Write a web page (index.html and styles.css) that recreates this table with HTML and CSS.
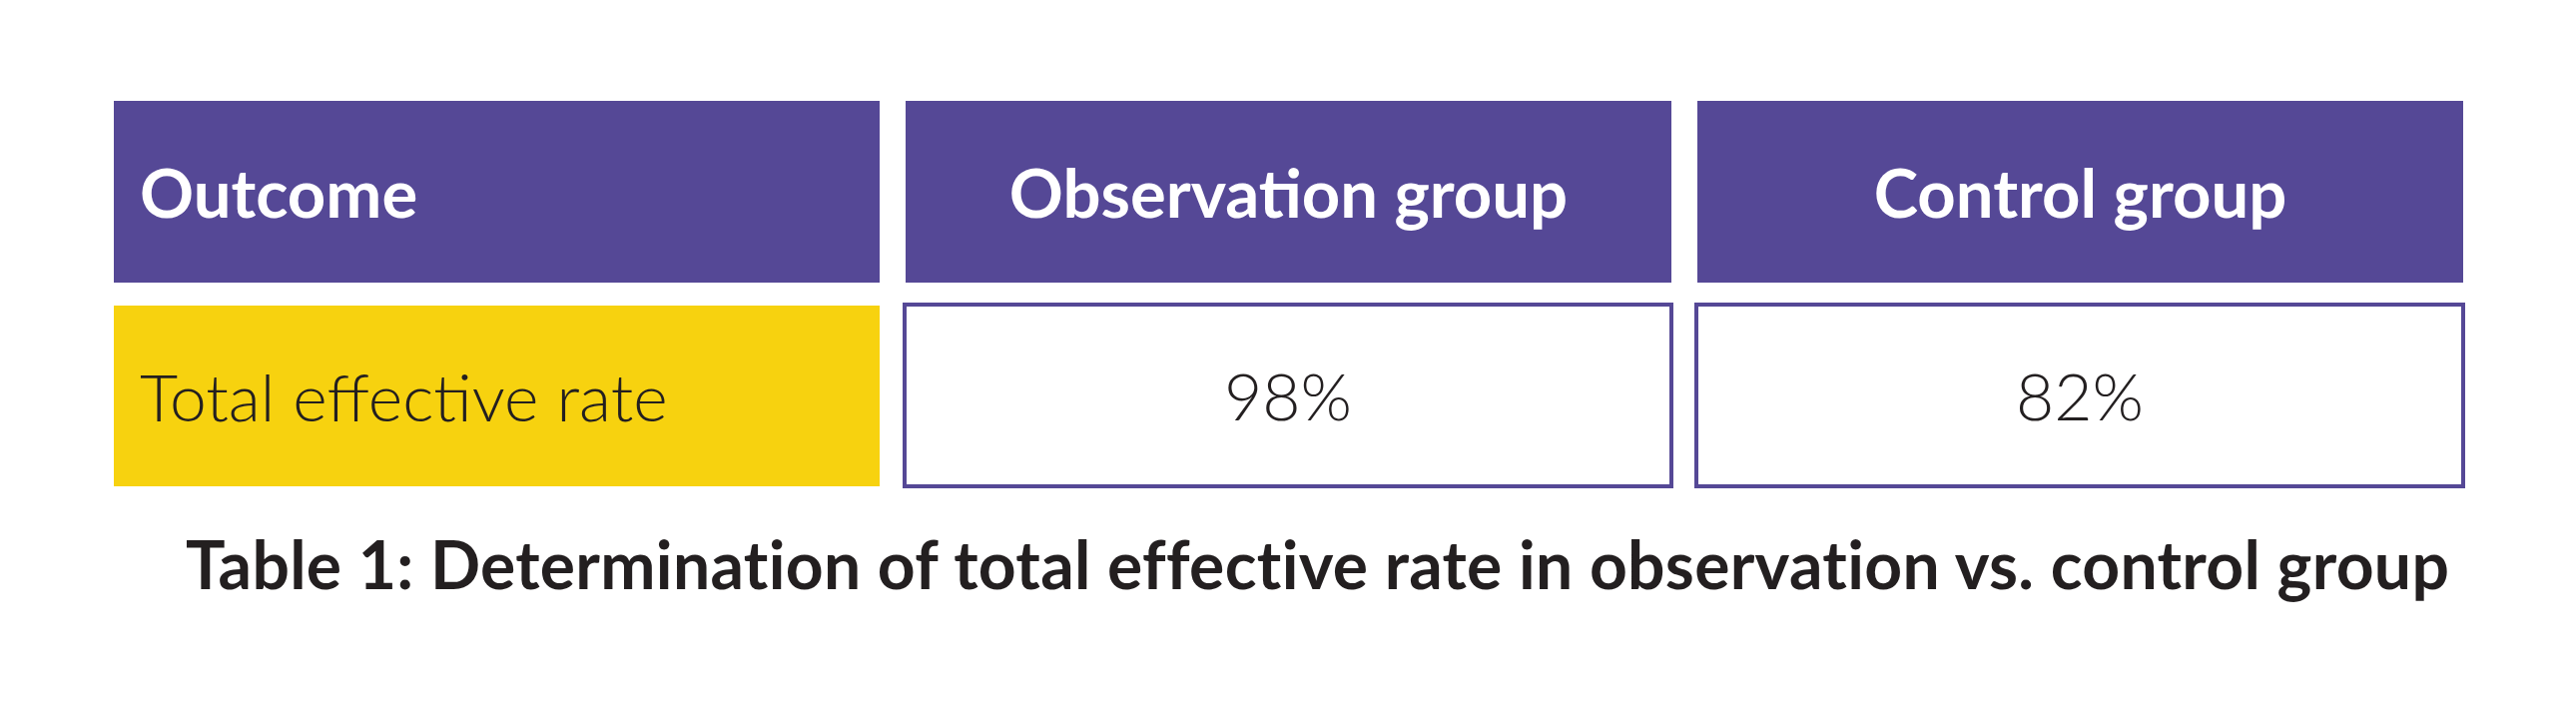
FILE: index.html
```html
<!DOCTYPE html>
<html lang="en">
<head>
<meta charset="utf-8">
<title>Table 1</title>
<link rel="stylesheet" href="styles.css">
</head>
<body>
<main class="figure">
  <div class="table">
    <div class="cell head head-left">Outcome</div>
    <div class="cell head">Observation group</div>
    <div class="cell head">Control group</div>
    <div class="cell label">Total effective rate</div>
    <div class="cell value">98%</div>
    <div class="cell value">82%</div>
  </div>
  <p class="caption">Table 1: Determination of total effective rate in observation vs. control group</p>
</main>
</body>
</html>
```

FILE: styles.css
```css
html, body {
  margin: 0;
  padding: 0;
  background: #ffffff;
}

body {
  width: 2580px;
  height: 705px;
  overflow: hidden;
  font-family: "Lato", "Liberation Sans", sans-serif;
}

.figure {
  padding: 101px 0 0 114px;
}

.table {
  display: grid;
  grid-template-columns: 767px 767px 767px;
  grid-template-rows: 182px 181px;
  column-gap: 26px;
  row-gap: 23px;
}

.cell {
  display: flex;
  align-items: center;
  justify-content: center;
  font-size: 66px;
  line-height: 1;
  box-sizing: border-box;
}

.head {
  background: #554896;
  color: #ffffff;
  font-weight: 700;
  font-size: 67px;
}

.head-left {
  justify-content: flex-start;
  padding-left: 26px;
}

.label {
  background: #f7d20f;
  color: #231f20;
  font-weight: 300;
  justify-content: flex-start;
  padding-left: 26px;
}

.value {
  background: #ffffff;
  border: 4px solid #554896;
  color: #231f20;
  font-weight: 300;
  margin: -3px -2px -2px -3px;
}

.caption {
  margin: 45px 0 0 72px;
  font-size: 66px;
  line-height: 1;
  font-weight: 700;
  letter-spacing: 0.3px;
  color: #231f20;
}
```
